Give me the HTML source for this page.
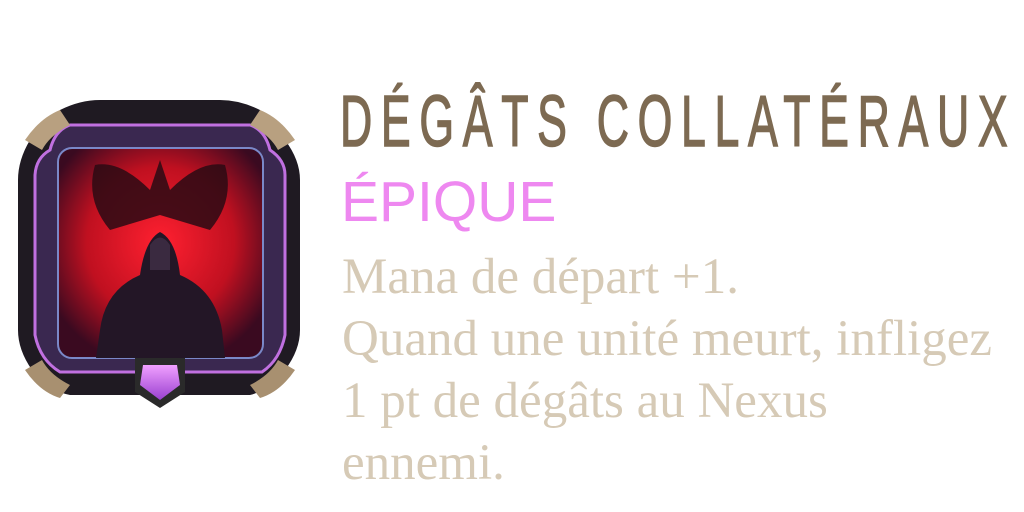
<!DOCTYPE html>
<html><head><meta charset="utf-8"><style>
html,body{margin:0;padding:0;background:#fff;width:1024px;height:512px;overflow:hidden;position:relative}
.t{position:absolute;left:340px;top:81px;font-family:"Liberation Sans Narrow","Liberation Sans",sans-serif;font-size:72px;color:#7d6a52;letter-spacing:14px;white-space:nowrap;transform-origin:0 0;transform:scaleX(0.62);-webkit-text-stroke:1.5px #7d6a52}
.r{position:absolute;left:341px;top:169px;font-family:"Liberation Sans",sans-serif;font-size:57px;color:#ee88f0;white-space:nowrap}
.b{position:absolute;left:342px;top:246px;font-family:"Liberation Serif",serif;font-size:51px;line-height:62px;color:#d6cab6;white-space:nowrap}
svg{position:absolute;left:0;top:0}
</style></head><body>
<svg width="320" height="420" viewBox="0 0 320 420">
<defs>
<radialGradient id="rg" cx="0.5" cy="0.45" r="0.6"><stop offset="0" stop-color="#ff2030"/><stop offset="0.6" stop-color="#c01020"/><stop offset="1" stop-color="#3a0a20"/></radialGradient>
<linearGradient id="gm" x1="0" y1="0" x2="0" y2="1"><stop offset="0" stop-color="#f0a0ff"/><stop offset="1" stop-color="#9a40d0"/></linearGradient>
</defs>
<path d="M60 110 Q80 100 100 100 L220 100 Q240 100 260 110 Q275 125 285 140 Q300 160 300 180 L300 330 Q300 350 285 370 Q270 390 250 395 L70 395 Q45 390 32 370 Q18 350 18 330 L18 180 Q18 160 30 140 Q42 122 60 110Z" fill="#1f1a22"/>
<path d="M70 125 L250 125 Q265 130 270 150 Q285 160 285 175 L285 335 Q280 360 262 372 L60 372 Q40 360 35 335 L35 175 Q36 158 50 150 Q55 130 70 125Z" fill="#3a2850" stroke="#c070e0" stroke-width="3"/>
<rect x="58" y="148" width="205" height="210" rx="14" fill="url(#rg)" stroke="#7a88c8" stroke-width="2"/>
<path d="M95 165 Q120 160 150 190 L160 160 L170 190 Q200 160 225 165 Q235 200 210 230 L160 215 L110 230 Q85 200 95 165Z" fill="#2a0a14" opacity="0.85"/>
<path d="M100 330 Q105 290 140 275 Q145 240 160 232 Q176 240 180 275 Q215 290 222 330 L225 358 L96 358Z" fill="#231626"/>
<path d="M150 245 Q160 230 170 245 L170 270 L150 270Z" fill="#3a2a40"/>
<path d="M25 140 Q40 118 60 110 L70 125 Q50 135 42 150Z" fill="#b8a080"/>
<path d="M295 140 Q280 118 260 110 L250 125 Q270 135 278 150Z" fill="#b8a080"/>
<path d="M25 370 Q40 392 60 398 L70 385 Q50 375 42 360Z" fill="#a89070"/>
<path d="M295 370 Q280 392 260 398 L250 385 Q270 375 278 360Z" fill="#a89070"/>
<path d="M135 358 L185 358 L185 392 L160 408 L135 392Z" fill="#2a2a2a"/>
<path d="M143 365 L177 365 L180 385 L160 400 L140 385Z" fill="url(#gm)"/>
</svg>
<div class="t">DÉGÂTS COLLATÉRAUX</div>
<div class="r">ÉPIQUE</div>
<div class="b">Mana de départ +1.<br>Quand une unité meurt, infligez<br>1 pt de dégâts au Nexus<br>ennemi.</div>
</body></html>
